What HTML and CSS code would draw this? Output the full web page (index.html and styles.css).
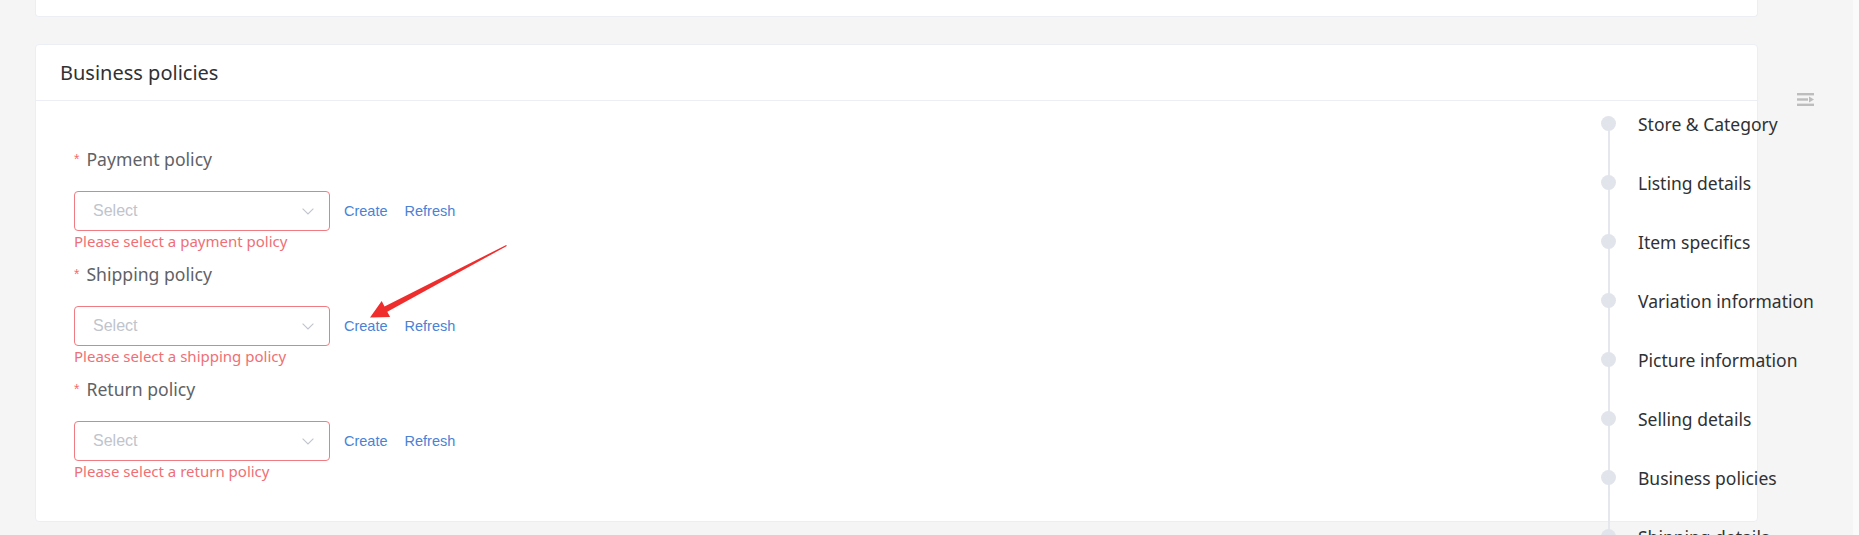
FILE: index.html
```html
<!DOCTYPE html>
<html lang="en">
<head>
    <meta charset="UTF-8">
    <meta name="viewport" content="width=device-width, initial-scale=1.0">
    <title>Business policies</title>
    <link rel="stylesheet" href="styles.css">
</head>
<body>
    <div class="page">
        <div class="card card-prev"></div>

        <div class="card">
            <div class="card-header">Business policies</div>
            <div class="card-body">

                <div class="form-item">
                    <div class="form-label"><span class="req">*</span>Payment policy</div>
                    <div class="form-row">
                        <div class="select">
                            <span class="placeholder">Select</span>
                            <svg class="chevron" width="12" height="7" viewBox="0 0 12 7"><path d="M0.6 0.6 L6 6 L11.4 0.6" fill="none" stroke="#c0c4cc" stroke-width="1.1"/></svg>
                        </div>
                        <a href="#" class="link">Create</a>
                        <a href="#" class="link">Refresh</a>
                    </div>
                    <div class="form-error">Please select a payment policy</div>
                </div>

                <div class="form-item">
                    <div class="form-label"><span class="req">*</span>Shipping policy</div>
                    <div class="form-row">
                        <div class="select">
                            <span class="placeholder">Select</span>
                            <svg class="chevron" width="12" height="7" viewBox="0 0 12 7"><path d="M0.6 0.6 L6 6 L11.4 0.6" fill="none" stroke="#c0c4cc" stroke-width="1.1"/></svg>
                        </div>
                        <a href="#" class="link">Create</a>
                        <a href="#" class="link">Refresh</a>
                    </div>
                    <div class="form-error">Please select a shipping policy</div>
                </div>

                <div class="form-item">
                    <div class="form-label"><span class="req">*</span>Return policy</div>
                    <div class="form-row">
                        <div class="select">
                            <span class="placeholder">Select</span>
                            <svg class="chevron" width="12" height="7" viewBox="0 0 12 7"><path d="M0.6 0.6 L6 6 L11.4 0.6" fill="none" stroke="#c0c4cc" stroke-width="1.1"/></svg>
                        </div>
                        <a href="#" class="link">Create</a>
                        <a href="#" class="link">Refresh</a>
                    </div>
                    <div class="form-error">Please select a return policy</div>
                </div>

            </div><!-- card-body -->
        </div><!-- card -->
    </div><!-- page -->

    <!-- annotation arrow -->
    <svg class="annot-arrow" width="152" height="90" viewBox="0 0 152 90">
        <polygon points="10,81.5 30.1,81.1 27.3,75.8 146.8,10 146.2,9 24.5,70.4 21.7,65.1" fill="#ef2d2d"/>
    </svg>

    <!-- anchor nav -->
    <ul class="anchor-nav">
        <li><span class="dot"></span>Store &amp; Category</li>
        <li><span class="dot"></span>Listing details</li>
        <li><span class="dot"></span>Item specifics</li>
        <li><span class="dot"></span>Variation information</li>
        <li><span class="dot"></span>Picture information</li>
        <li><span class="dot"></span>Selling details</li>
        <li><span class="dot"></span>Business policies</li>
        <li><span class="dot"></span>Shipping details</li>
    </ul>

    <svg class="nav-toggle" width="17" height="13" viewBox="0 0 17 13">
        <rect x="0" y="0" width="17" height="2.4" fill="#bdbdbd"/>
        <rect x="0" y="5.3" width="11" height="2.4" fill="#bdbdbd"/>
        <polygon points="12,3.6 17,6.5 12,9.4" fill="#bdbdbd"/>
        <rect x="0" y="10.6" width="17" height="2.4" fill="#bdbdbd"/>
    </svg>

    <div class="scroll-edge"></div>
</body>
</html>
```

FILE: styles.css
```css
html, body{
    margin: 0;
    height: 100%;
}
body{
    position: relative;
    overflow: hidden;
    background: #f5f5f5;
    font-family: "Noto Sans", "Open Sans", sans-serif;
    color: #303133;
}
ul, li{
    list-style: none;
    margin: 0;
    padding: 0;
}
a{
    text-decoration: none;
}

.page{
    padding: 0 101px 0 35px;
}
.card{
    background: #fff;
    border: 1px solid #ebeef5;
    border-radius: 4px;
}
.card-prev{
    height: 16px;
    border-top: 0;
    border-radius: 0 0 4px 4px;
    margin-bottom: 27px;
}
.card-header{
    height: 55px;
    line-height: 56px;
    padding-left: 24px;
    font-size: 20px;
    color: #303133;
    border-bottom: 1px solid #ebeef5;
}
.card-body{
    padding: 46px 38px 29px;
}

/* form */
.form-item{
    margin-bottom: 11px;
}
.form-label{
    height: 24px;
    line-height: 24px;
    margin-bottom: 20px;
    font-size: 17.6px;
    color: #5f6266;
}
.form-label .req{
    font-family: "Liberation Sans", Arial, sans-serif;
    font-size: 14px;
    color: #f56c6c;
    margin-right: 7px;
    vertical-align: top;
}
.form-row{
    display: flex;
    align-items: center;
    height: 40px;
}
.select{
    box-sizing: border-box;
    width: 256px;
    height: 40px;
    border: 1px solid #ef7c82;
    border-radius: 4px;
    display: flex;
    align-items: center;
    justify-content: space-between;
    padding: 0 15px 0 18px;
}
.placeholder{
    font-family: "Liberation Sans", Arial, sans-serif;
    font-size: 16px;
    color: #c0c4cc;
}
.link{
    font-family: "Liberation Sans", Arial, sans-serif;
    font-size: 14.5px;
    color: #4a82d6;
    margin-left: 14px;
}
.link + .link{
    margin-left: 17px;
}
.form-error{
    height: 20px;
    line-height: 20px;
    font-size: 15px;
    color: #ef6f76;
}

/* overlays */
.annot-arrow{
    position: absolute;
    left: 360px;
    top: 236px;
}
.anchor-nav{
    position: absolute;
    left: 1601px;
    top: 94px;
}
.anchor-nav::before{
    content: "";
    position: absolute;
    left: 6.5px;
    top: 29px;
    bottom: -40px;
    width: 2px;
    background: #e4e7ed;
}
.anchor-nav li{
    position: relative;
    height: 59px;
    display: flex;
    align-items: center;
    font-size: 17.5px;
    color: #303133;
    white-space: nowrap;
}
.anchor-nav .dot{
    width: 15px;
    height: 15px;
    border-radius: 50%;
    background: #e2e4ec;
    margin-right: 22px;
    flex: none;
}
.nav-toggle{
    position: absolute;
    left: 1797px;
    top: 93px;
}
.scroll-edge{
    position: absolute;
    right: 0;
    top: 0;
    bottom: 0;
    width: 6px;
    background: #fafafa;
}
```
